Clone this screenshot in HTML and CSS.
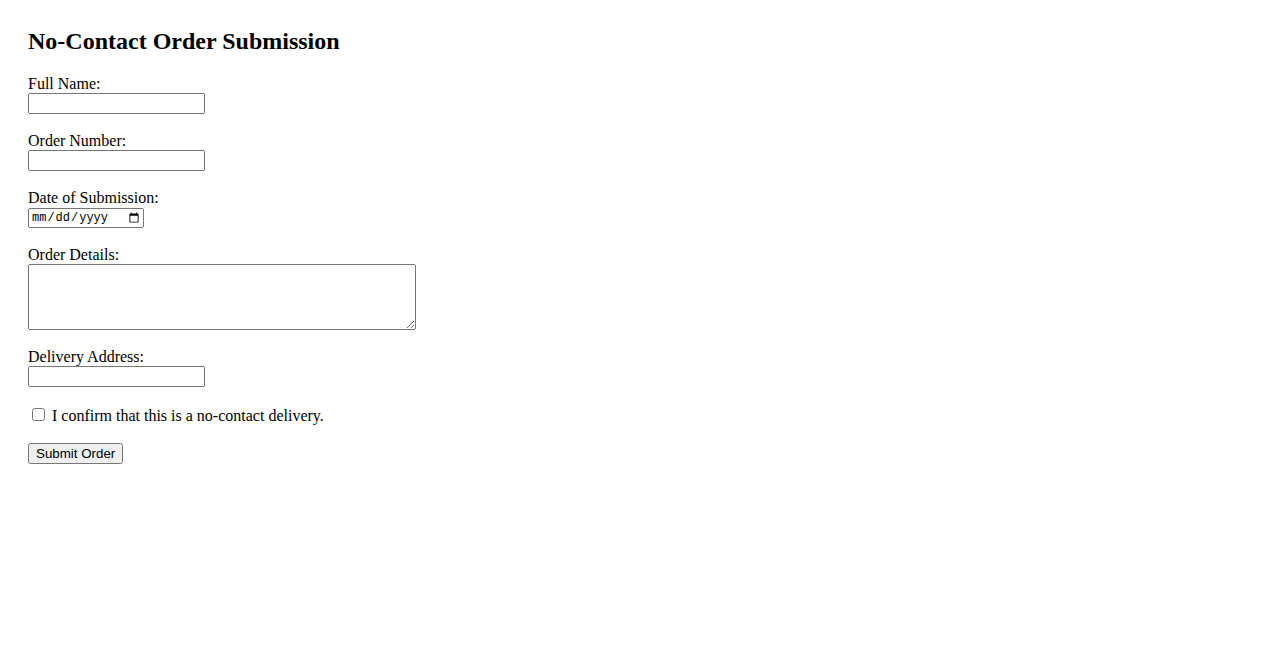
FILE: index.html
```html
<!DOCTYPE html>
<html>
<head lang="en">
    <meta charset="UTF-8">
    <title>No-Contact Order Submission</title>
    <link rel="stylesheet" href="styles.css">
</head>
<body>
<div id="container">
    <h2>No-Contact Order Submission</h2>
    <form id="order">
        <label for="name">Full Name:</label><br>
        <input type="text" id="name" name="name"><br><br>

        <label for="number">Order Number:</label><br>
        <input type="text" id="number" name="number"><br><br>

        <label for="date">Date of Submission:</label><br>
        <input type="date" id="date" name="date"><br><br>

        <label for="details">Order Details:</label><br>
        <textarea id="details" name="details" rows="4" cols="50"></textarea><br><br>

        <label for="address">Delivery Address:</label><br>
        <input type="text" id="address" name="address"><br><br>

        <input type="checkbox" id="confirm" name="confirm">
        <label for="confirm">I confirm that this is a no-contact delivery.</label><br><br>

        <input type="submit" value="Submit Order">
    </form>
</div>
</body>
</html>
```

FILE: styles.css
```css
body{
    margin: 8px;
    font-family: "Liberation Serif", "Times New Roman", serif;
    font-size: 16px;
    color: #000;
}
#container{
    padding: 20px;
}
h2{
    margin: 0 0 20px;
    font-size: 24px;
}
input{
    font-family: "Liberation Sans", Arial, sans-serif;
}
input[type="text"]{
    width: 177px;
    box-sizing: border-box;
}
input[type="date"]{
    width: 116px;
    box-sizing: border-box;
    font-family: "Liberation Mono", monospace;
    font-size: 12px;
}
textarea{
    width: 388px;
    box-sizing: border-box;
    vertical-align: bottom;
    font-family: "Liberation Mono", monospace;
}
```
